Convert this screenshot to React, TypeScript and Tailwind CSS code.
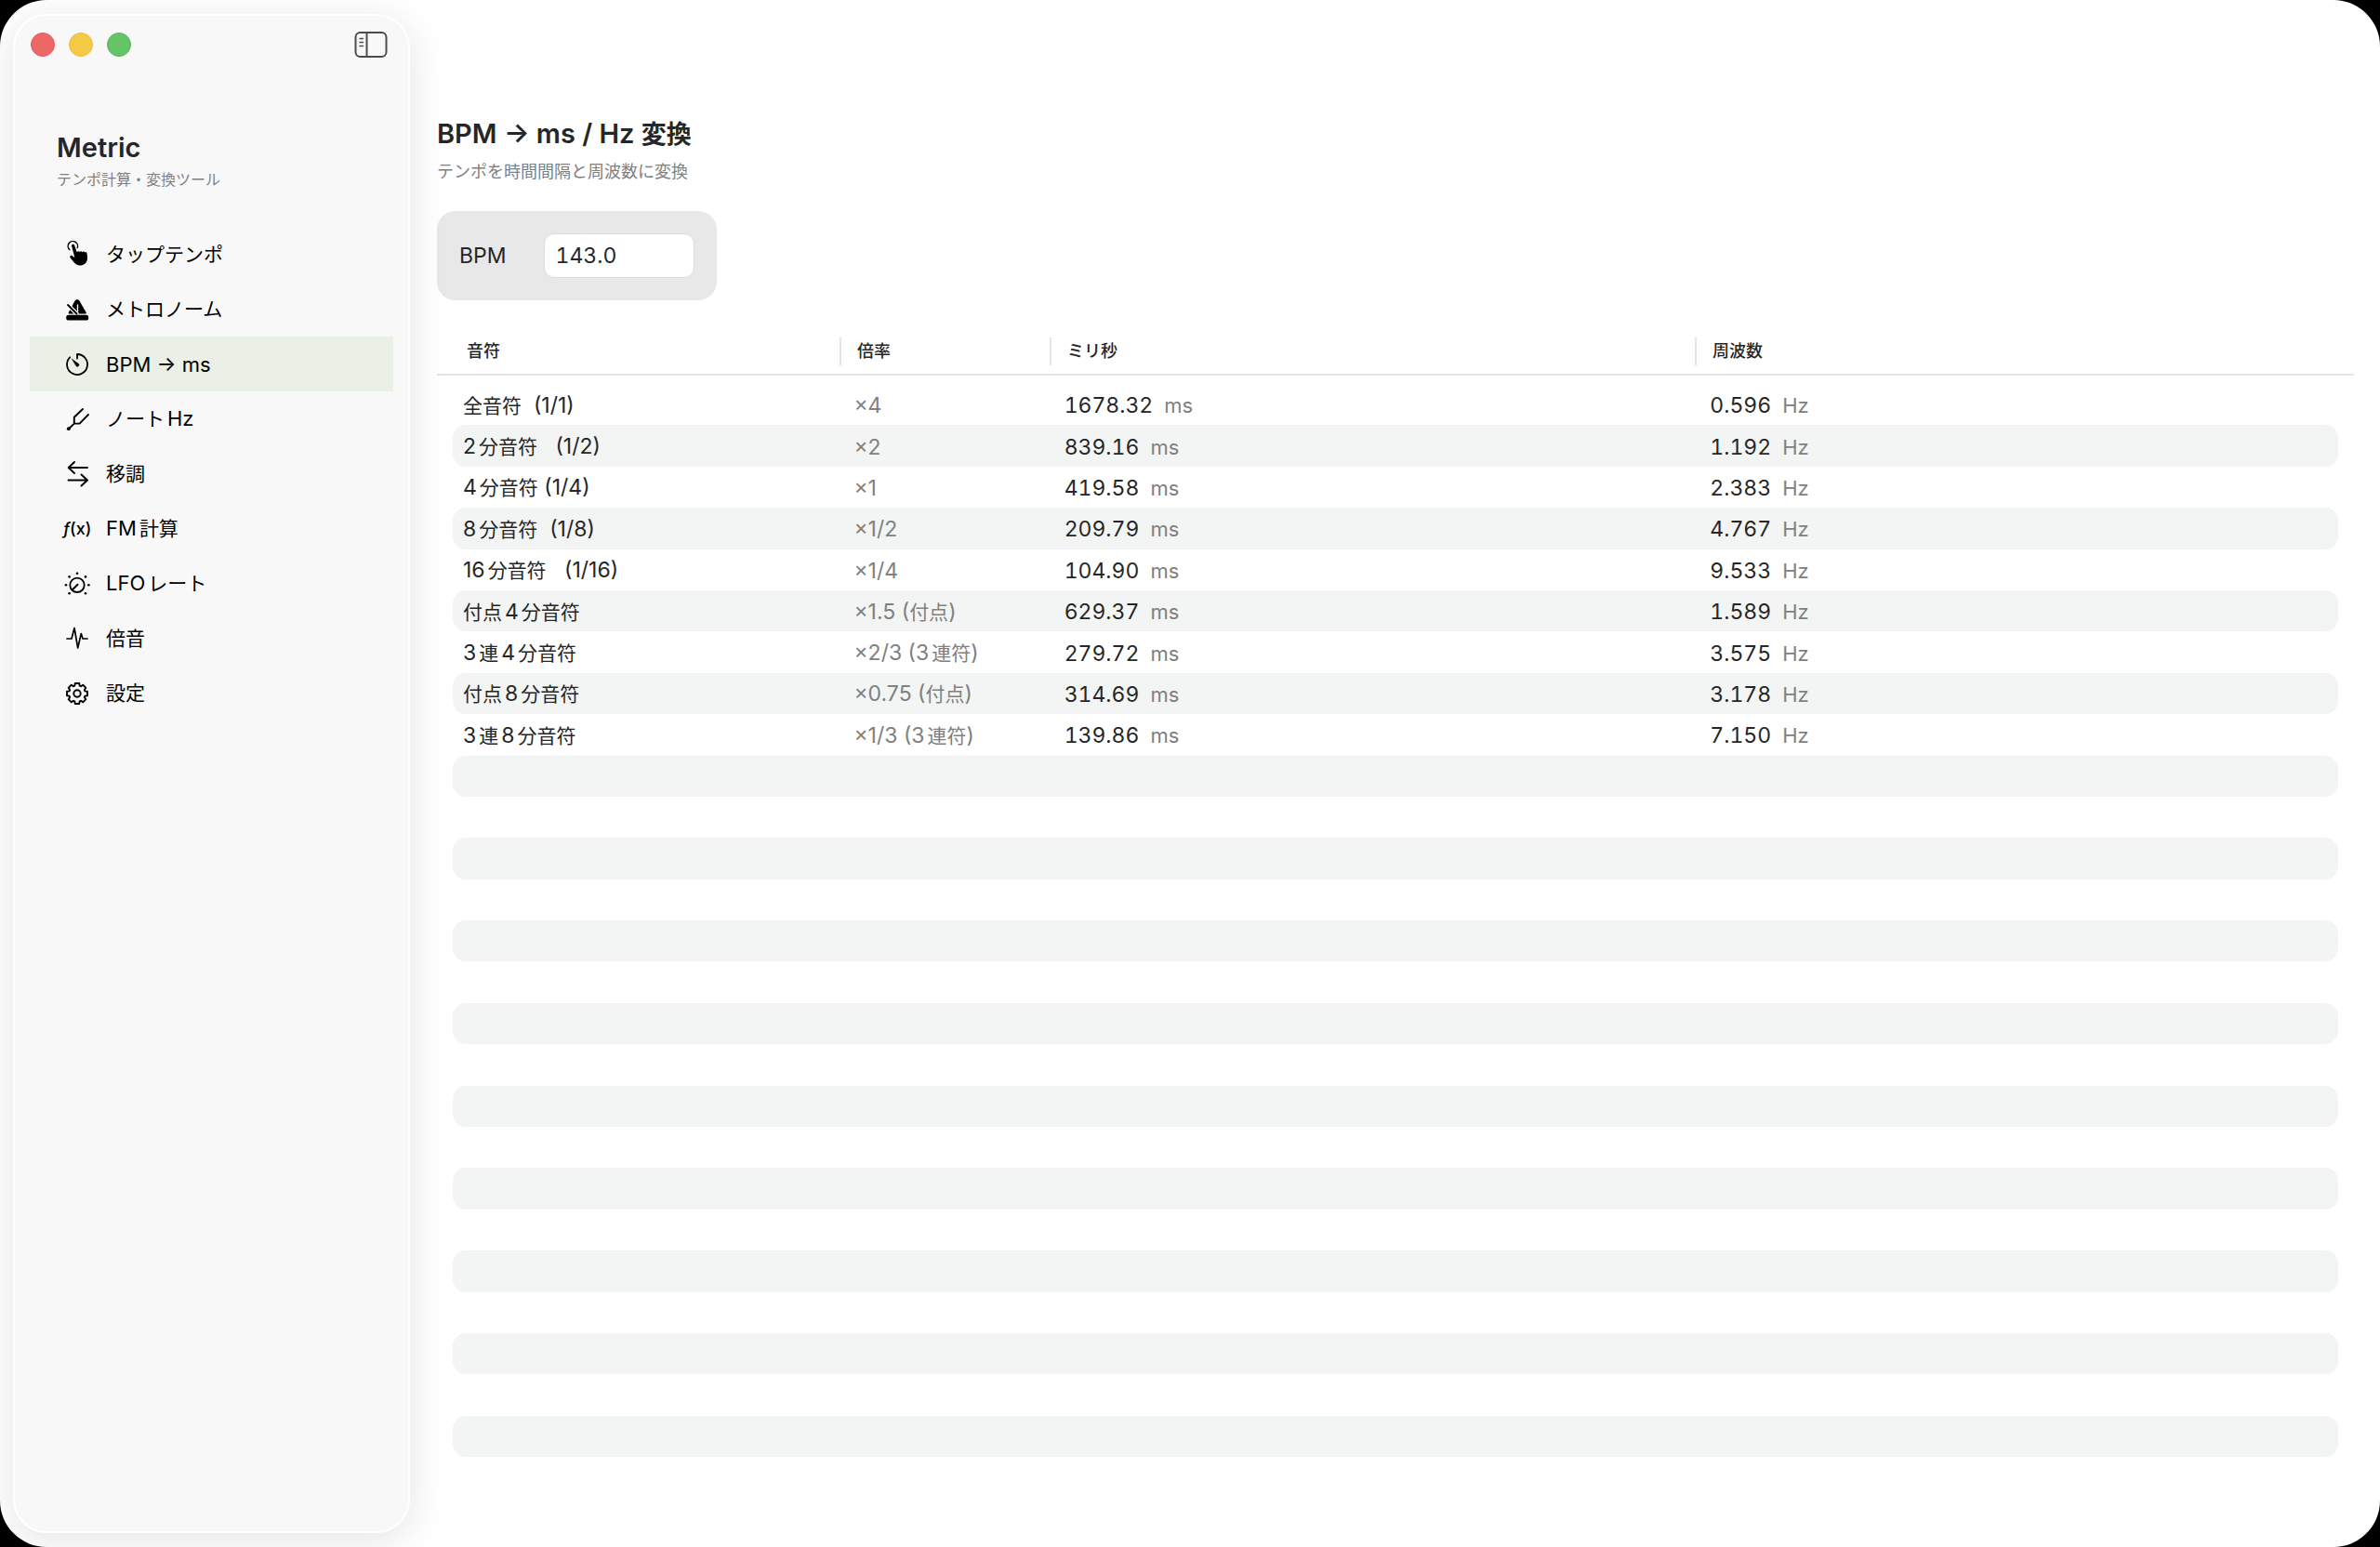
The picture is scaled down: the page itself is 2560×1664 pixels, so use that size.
import { useState } from "react";
import type { ReactNode } from "react";

type NavItem = {
  id: string;
  label: string;
  icon: ReactNode;
};

type NoteRow = {
  name: string;
  ratio: string;
  ms: string;
  hz: string;
};

const ROW_COUNT = 26;

const rows: NoteRow[] = [
  { name: "全音符  (1/1)", ratio: "×4", ms: "1678.32", hz: "0.596" },
  { name: "2分音符   (1/2)", ratio: "×2", ms: "839.16", hz: "1.192" },
  { name: "4分音符 (1/4)", ratio: "×1", ms: "419.58", hz: "2.383" },
  { name: "8分音符  (1/8)", ratio: "×1/2", ms: "209.79", hz: "4.767" },
  { name: "16分音符   (1/16)", ratio: "×1/4", ms: "104.90", hz: "9.533" },
  { name: "付点4分音符", ratio: "×1.5 (付点)", ms: "629.37", hz: "1.589" },
  { name: "3連4分音符", ratio: "×2/3 (3連符)", ms: "279.72", hz: "3.575" },
  { name: "付点8分音符", ratio: "×0.75 (付点)", ms: "314.69", hz: "3.178" },
  { name: "3連8分音符", ratio: "×1/3 (3連符)", ms: "139.86", hz: "7.150" },
];

function Icon({ children }: { children: ReactNode }) {
  return (
    <svg
      viewBox="0 0 30 30"
      className="size-[30px] shrink-0"
      fill="none"
      stroke="currentColor"
      strokeWidth="2"
      strokeLinecap="round"
      strokeLinejoin="round"
      aria-hidden="true"
    >
      {children}
    </svg>
  );
}

function gearPath(teeth: number) {
  const step = (Math.PI * 2) / teeth;
  const points: string[] = [];
  for (let i = 0; i < teeth; i++) {
    const mid = i * step - Math.PI / 2;
    for (const [offset, radius] of [
      [-0.31, 8.8],
      [-0.2, 11.2],
      [0.2, 11.2],
      [0.31, 8.8],
    ]) {
      const angle = mid + offset;
      points.push(`${(15 + Math.cos(angle) * radius).toFixed(2)} ${(15 + Math.sin(angle) * radius).toFixed(2)}`);
    }
  }
  return `M${points.join("L")}Z`;
}

const navItems: NavItem[] = [
  {
    id: "tap",
    label: "タップテンポ",
    icon: (
      <Icon>
        <path d="M6.9 9.6A5.2 5.2 0 1 1 15.2 7.6" strokeWidth="1.4" />
        <path
          d="M9.1 5.8a1.6 1.6 0 0 1 3.1-.9l2.5 7.4c.5-1.4 2.2-1.5 2.9-.3.8-1.2 2.4-1 3 .2.9-1 2.5-.8 3 .4.8-.6 1.900-.2 2 1l.4 4.400c.2 4-1.800 7.200-5.800 8.200-3.600.8-6.600-.4-8.800-3.200l-3.800-4.800c-1.100-1.500.5-3 2-2.100l2.800 2.200z"
          fill="currentColor"
          stroke="none"
        />
      </Icon>
    ),
  },
  {
    id: "metronome",
    label: "メトロノーム",
    icon: (
      <Icon>
        <path
          d="M12.6 5.6c1-1.8 3.8-1.8 4.8 0l7.2 12.4c.4.8.2 1.6-.8 1.6H6.800c-1 0-1.400-.8-1-1.600z"
          fill="currentColor"
          stroke="none"
        />
        <path d="M4 9l11.5 11.5" stroke="#f8f8f8" strokeWidth="4.4" strokeLinecap="butt" />
        <path d="M15.5 10v7" stroke="#f8f8f8" strokeWidth="1.4" />
        <path d="M5 10l9.500 9.500" strokeWidth="1.8" />
        <rect x="3.2" y="20.8" width="24" height="5.8" rx="2.6" fill="currentColor" stroke="none" />
      </Icon>
    ),
  },
  {
    id: "bpm",
    label: "BPM → ms",
    icon: (
      <Icon>
        <path d="M15 8.6V4A11 11 0 1 1 7.2 7.3" strokeWidth="1.8" />
        <path d="M9.7 9.5l7 5.1a1.8 1.8 0 0 1-2.3 2.5z" fill="currentColor" strokeWidth="0.6" />
      </Icon>
    ),
  },
  {
    id: "note",
    label: "ノートHz",
    icon: (
      <Icon>
        <path d="M21 4l-9.2 8.7v6.9h5.8L27 10M11.8 19.6L6 25.2" strokeWidth="1.9" />
        <circle cx="5.8" cy="25.2" r="1.9" fill="currentColor" stroke="none" />
      </Icon>
    ),
  },
  {
    id: "transpose",
    label: "移調",
    icon: (
      <Icon>
        <path d="M26 8H5.7M12 2L5.7 8l6.3 6M5.5 21.5H26M19.5 15.5l6.5 6-6.5 6" strokeWidth="1.9" />
      </Icon>
    ),
  },
  {
    id: "fm",
    label: "FM計算",
    icon: (
      <span className="flex w-[30px] shrink-0 justify-center text-[18px] font-medium" aria-hidden="true">
        <i>ƒ</i>(x)
      </span>
    ),
  },
  {
    id: "lfo",
    label: "LFOレート",
    icon: (
      <Icon>
        <circle cx="15" cy="16.3" r="7.7" strokeWidth="1.8" />
        <path d="M15.5 15.8l-5.5 5.5" />
        <g fill="currentColor" stroke="none">
          <circle cx="15" cy="3.7" r="1.3" />
          <circle cx="6.6" cy="7.4" r="1.3" />
          <circle cx="24" cy="7.4" r="1.3" />
          <circle cx="3" cy="16.3" r="1.3" />
          <circle cx="27.4" cy="16.3" r="1.3" />
          <circle cx="6.6" cy="25.3" r="1.3" />
          <circle cx="24" cy="25.3" r="1.3" />
        </g>
      </Icon>
    ),
  },
  {
    id: "harmonics",
    label: "倍音",
    icon: (
      <Icon>
        <path d="M4 15h5l3-11.5L15.7 25l3.6-15.5L21 15h5" strokeWidth="1.7" />
      </Icon>
    ),
  },
  {
    id: "settings",
    label: "設定",
    icon: (
      <Icon>
        <path d={gearPath(8)} strokeWidth="1.9" />
        <circle cx="15" cy="15" r="3.7" strokeWidth="1.9" />
      </Icon>
    ),
  },
];

// Kana and kanji are set a little smaller than the Latin letters beside them.
function Mixed({ text }: { text: string }) {
  const parts = text.match(/[\u3040-\u30ff\u4e00-\u9fff]+|[^\u3040-\u30ff\u4e00-\u9fff]+/g) ?? [];
  return (
    <span className="whitespace-pre">
      {parts.map((part, i) => {
        const japanese = /[\u3040-\u9fff]/.test(part);
        if (!japanese) return <span key={i}>{part}</span>;
        const before = i > 0 && /[\w]$/.test(parts[i - 1]);
        const after = i < parts.length - 1 && /^[\w]/.test(parts[i + 1]);
        return (
          <span key={i} className={`text-[21px] ${before ? "ml-[3px]" : ""} ${after ? "mr-[3px]" : ""}`}>
            {part}
          </span>
        );
      })}
    </span>
  );
}

function Sidebar({ active, onSelect }: { active: string; onSelect: (id: string) => void }) {
  return (
    <aside className="z-10 my-[15px] ml-[14px] w-[427px] shrink-0 rounded-[36px] border-2 border-white bg-[#f8f8f8] shadow-[0_8px_44px_rgba(0,0,0,0.11)]">
      <div className="flex items-center justify-between pt-[17px] pr-[22px] pl-[17px]">
        <div className="flex gap-[15px]">
          <button type="button" aria-label="閉じる" className="size-[26px] rounded-full border border-[#e85454] bg-[#ee6767]" />
          <button type="button" aria-label="しまう" className="size-[26px] rounded-full border border-[#edbf2f] bg-[#f3c945]" />
          <button type="button" aria-label="拡大" className="size-[26px] rounded-full border border-[#50b854] bg-[#65c466]" />
        </div>
        <button type="button" aria-label="サイドバー" className="text-[#4c4c4c]">
          <svg viewBox="0 0 36 28" className="h-7 w-9" fill="none" stroke="currentColor" strokeWidth="2">
            <rect x="1.5" y="1" width="33" height="26" rx="5" />
            <path d="M13.5 1v26" />
            <path d="M6 7.5h3.5M6 11.5h3.5M6 15.5h3.5" strokeWidth="1.5" strokeLinecap="round" />
          </svg>
        </button>
      </div>

      <div className="mt-[79px] pl-[45px]">
        <h1 className="text-[29px] leading-9 font-semibold text-[#262626]">Metric</h1>
        <p className="mt-1 text-[16px] leading-6 text-[#808080]">テンポ計算・変換ツール</p>
      </div>

      <nav className="mt-[39px] flex flex-col px-4">
        {navItems.map((item) => (
          <button
            key={item.id}
            type="button"
            onClick={() => onSelect(item.id)}
            className={`flex h-[59px] items-center gap-4 pl-9 text-left ${item.id === active ? "bg-[#eaf0e5]" : ""}`}
          >
            {item.icon}
            <Mixed text={item.label} />
          </button>
        ))}
      </nav>
    </aside>
  );
}

function NoteTable() {
  return (
    <table className="mt-10 flex flex-1 flex-col">
      <thead className="block border-b-2 border-[#e5e5e5] pb-[9px]">
        <tr className="grid h-[30px] grid-cols-[433fr_226fr_694fr_709fr] text-left text-[18px] leading-[30px] [&>th]:font-medium">
          <th className="pl-8">音符</th>
          <th className="border-l-2 border-[#e5e5e5] pl-[17px]">倍率</th>
          <th className="border-l-2 border-[#e5e5e5] pl-[17px]">ミリ秒</th>
          <th className="border-l-2 border-[#e5e5e5] pl-[17px]">周波数</th>
        </tr>
      </thead>
      <tbody className="flex flex-1 flex-col px-[17px] pt-[9px]">
        {Array.from({ length: ROW_COUNT }, (_, i) => {
          const row = rows[i];
          return (
            <tr
              key={i}
              className="grid flex-1 grid-cols-[416fr_226fr_694fr_690fr] items-center rounded-[14px] pt-0.5 text-[23px] even:bg-[#f3f5f4]"
            >
              {row && (
                <>
                  <td className="pl-[11px]">
                    <Mixed text={row.name} />
                  </td>
                  <td className="pl-[15px] text-[#808080]">
                    <Mixed text={row.ratio} />
                  </td>
                  <td className="flex items-baseline gap-3 pl-[15px]">
                    <span className="tabular-nums">{row.ms}</span>
                    <span className="text-[22px] text-[#808080]">ms</span>
                  </td>
                  <td className="flex items-baseline gap-3 pl-[15px]">
                    <span className="tabular-nums">{row.hz}</span>
                    <span className="text-[22px] text-[#808080]">Hz</span>
                  </td>
                </>
              )}
            </tr>
          );
        })}
      </tbody>
    </table>
  );
}

export default function App() {
  const [active, setActive] = useState("bpm");
  const [bpm, setBpm] = useState("143.0");

  return (
    <div lang="ja" className="min-h-screen bg-black font-['Inter','Noto_Sans_CJK_JP',sans-serif]">
      <div className="flex min-h-screen overflow-hidden rounded-[50px] bg-white text-[22px] leading-8 text-black">
        <Sidebar active={active} onSelect={setActive} />

        <main className="flex min-w-0 flex-1 flex-col pt-[124px] pr-7 pb-[97px] pl-[29px] text-[#262626]">
          <h2 className="text-[29px] leading-10 font-semibold">
            BPM → ms / Hz <span className="text-[27px]">変換</span>
          </h2>
          <p className="mt-2 text-[18px] leading-6 text-[#808080]">テンポを時間間隔と周波数に変換</p>

          <div className="mt-[30px] flex h-24 items-center gap-10 self-start rounded-[20px] bg-[#e8e8e8] px-6 text-[23px]">
            <label htmlFor="bpm">BPM</label>
            <input
              id="bpm"
              value={bpm}
              onChange={(e) => setBpm(e.target.value)}
              className="h-12 w-[162px] rounded-[11px] border border-[#dcdcdc] bg-white px-3 tabular-nums outline-none"
            />
          </div>

          <NoteTable />
        </main>
      </div>
    </div>
  );
}
